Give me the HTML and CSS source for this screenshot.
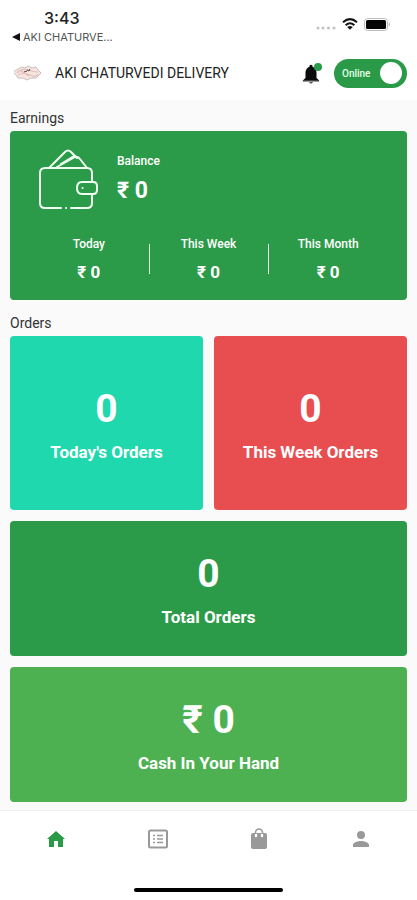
FILE: index.html
```html
<!DOCTYPE html>
<html lang="en">
<head>
<meta charset="utf-8">
<meta name="viewport" content="width=device-width, initial-scale=1">
<title>AKI CHATURVEDI DELIVERY</title>
<link rel="stylesheet" href="styles.css">
</head>
<body>
<div class="app">
  <div class="status">
    <div class="status-left">
      <div class="time">3:43</div>
      <a class="back" href="#"><svg width="9" height="8" viewBox="0 0 9 8" aria-hidden="true"><path d="M0 4L8 0v8z"/></svg>AKI CHATURVE...</a>
    </div>
    <div class="status-icons">
      <svg width="20" height="4" viewBox="0 0 20 4" fill="#c4c4c4" aria-hidden="true"><circle cx="2" cy="2" r="1.6"/><circle cx="7" cy="2" r="1.6"/><circle cx="12.500" cy="2" r="1.6"/><circle cx="18" cy="2" r="1.6"/></svg>
      <svg width="16" height="12" viewBox="0 0 16 12" aria-hidden="true"><path d="M1 4.200Q8-2 15 4.200M3.600 7.200Q8 3.400 12.400 7.200" fill="none" stroke="#151515" stroke-width="2"/><path d="M8 11.800L5.200 9Q8 6.800 10.800 9z" fill="#151515"/></svg>
      <svg width="27" height="13" viewBox="0 0 27 13" aria-hidden="true"><rect x=".5" y=".5" width="23" height="12" rx="3" fill="#fff" stroke="#bdbdbd"/><rect x="2" y="2" width="20" height="9" rx="1.500" fill="#050505"/><path d="M24.800 4.300q2 2.200 0 4.400z" fill="#aaa"/></svg>
    </div>
  </div>
  <header class="header">
    <svg class="logo" width="28" height="16" viewBox="0 0 28 16" aria-hidden="true"><path d="M4 4L8 2l3 1 3-2 4 2 4-1 2 3 3 3-3 3-2 2-5 0-4 2-4-2-5 0-2-3-3-3z" fill="#f5e6e2" stroke="#bdb0ae" stroke-width=".8"/><path d="M3 8q5-5 11-3t10 2M4 10q6-3 12 0t8-1M7 6l8 5" fill="none" stroke="#e3bcb7" stroke-width="1.200"/><path d="M13 5l2 1 1-2M10 7l3-1" stroke="#4f4747" stroke-width="1" fill="none"/></svg>
    <h1 class="title">AKI CHATURVEDI DELIVERY</h1>
    <button class="bell" type="button" aria-label="Notifications"><svg width="22" height="24" viewBox="0 0 22 24"><path d="M9.500 5.700V4.500q1.500-1.500 3 0v1.200Q16 7 16.500 11v6l2.700 2.500v.8H2.800v-.8L5.500 17v-6Q6 7 9.500 5.700z" fill="#0b0b0b"/><path d="M3 20h16" stroke="#777" stroke-width="1"/><path d="M9 21.300h4q-2 2.400-4 0z" fill="#222"/><circle cx="18" cy="6" r="4" fill="#2a9a48"/></svg></button>
    <label class="toggle">Online<input type="checkbox" checked></label>
  </header>
  <main class="main">
    <h2 class="heading">Earnings</h2>
    <section class="card earnings">
      <div class="balance">
        <svg width="60" height="62" viewBox="0 0 60 62" fill="none" stroke="#eefff1" stroke-width="2" stroke-linecap="round" stroke-linejoin="round" aria-hidden="true"><path d="M23 59H7q-5 0-5-5V24q0-5 5-5h42q5 0 5 5v9M54 45v9q0 5-5 5H33M28 59h.1"/><path d="M12 18L27 3q3-3 6 0l6 6M19 18L37 8q3-1 5 2l7 9M23 15L36 7"/><path d="M44 33h11q4 0 4 4v4q0 4-4 4H44q-5 0-5-6t5-6z"/><path d="M44.500 39h.1"/></svg>
        <div class="balance-text">
          <div class="label">Balance</div>
          <div class="balance-value">₹ 0</div>
        </div>
      </div>
      <div class="stats">
        <div class="stat"><div class="label">Today</div><div class="stat-value">₹ 0</div></div>
        <div class="stat"><div class="label">This Week</div><div class="stat-value">₹ 0</div></div>
        <div class="stat"><div class="label">This Month</div><div class="stat-value">₹ 0</div></div>
      </div>
    </section>
    <h2 class="heading">Orders</h2>
    <div class="orders">
      <section class="card tile tall teal"><div class="count">0</div><div class="caption">Today's Orders</div></section>
      <section class="card tile tall red"><div class="count">0</div><div class="caption">This Week Orders</div></section>
      <section class="card tile wide green"><div class="count">0</div><div class="caption">Total Orders</div></section>
      <section class="card tile wide light"><div class="count">₹ 0</div><div class="caption">Cash In Your Hand</div></section>
    </div>
  </main>
  <nav class="nav">
    <a class="active" href="#" aria-label="Home"><svg width="24" height="24" viewBox="0 0 24 24" fill="currentColor"><path d="M10 20v-6h4v6h5v-8h2L12 4l-9 8h2v8z"/></svg></a>
    <a href="#" aria-label="Orders"><svg width="24" height="24" viewBox="0 0 24 24" fill="none" stroke="currentColor"><rect x="3" y="3.500" width="18" height="17" rx="1.500" stroke-width="2"/><path d="M7 8.500h2M7 12h2M7 15.500h2M11 8.500h6M11 12h6M11 15.500h6" stroke-width="1.500"/></svg></a>
    <a href="#" aria-label="Deliveries"><svg width="24" height="24" viewBox="0 0 24 24" fill="none"><path d="M8.500 6.500V5.500a3.500 3.500 0 0 1 7 0v1" stroke="currentColor" stroke-width="1.600"/><rect x="4" y="6" width="16" height="16" rx="2" fill="currentColor"/><path d="M9 8v1M15 8v1" stroke="#fff" stroke-width="2.400" stroke-linecap="round"/></svg></a>
    <a href="#" aria-label="Profile"><svg width="24" height="24" viewBox="0 0 24 24" fill="currentColor"><path d="M12 12a4 4 0 1 0 0-8 4 4 0 0 0 0 8zm0 2c-2.700 0-8 1.300-8 4v2h16v-2c0-2.700-5.300-4-8-4z"/></svg></a>
  </nav>
  <div class="home-bar"></div>
</div>
</body>
</html>
```
FILE: styles.css
```css
* {
  box-sizing: border-box;
}

body {
  margin: 0;
  background: #fff;
  color: #222;
  font-family: Roboto, "Noto Sans", sans-serif;
}

h1,
h2 {
  margin: 0;
  font-weight: 400;
}

svg {
  display: block;
  flex: none;
}

.app {
  display: flex;
  flex-direction: column;
  min-height: 100vh;
}

.status {
  display: flex;
  justify-content: space-between;
  height: 46px;
  padding: 8px 26px 0 12px;
  font-family: Inter, sans-serif;
}

.time {
  padding-left: 32px;
  font-size: 16px;
  font-weight: 500;
  line-height: 20px;
}

.back {
  display: flex;
  align-items: center;
  gap: 2px;
  color: #555;
  font-size: 11px;
  line-height: 18px;
  text-decoration: none;
}

.back svg {
  fill: #111;
}

.status-icons {
  display: flex;
  align-items: center;
  gap: 6px;
  height: 32px;
}

.status-icons svg:first-child {
  margin-top: 8px;
}

.header {
  display: flex;
  align-items: center;
  height: 54px;
  padding: 0 10px 0 14px;
}

.title {
  flex: 1;
  margin-left: 13px;
  font-size: 14px;
}

.bell {
  margin-right: 12px;
  padding: 0;
  border: 0;
  background: none;
}

.toggle {
  display: flex;
  align-items: center;
  justify-content: space-between;
  width: 73px;
  height: 29px;
  padding: 0 5px 0 8px;
  border-radius: 15px;
  background: #2a9a48;
  color: #e5ffe9;
  font-size: 10px;
  font-weight: 500;
}

.toggle input {
  appearance: none;
  width: 22px;
  height: 22px;
  margin: 0;
  border-radius: 50%;
  background: #fff;
}

.main {
  flex: 1;
  padding: 5px 10px 8px;
  border-bottom: 1px solid #f0f0f0;
  background: #fafafa;
}

.heading {
  color: #333;
  font-size: 14px;
  line-height: 26px;
}

.card {
  border-radius: 4px;
  background: #2c9b49;
  color: #fff;
}

.earnings {
  margin-bottom: 10px;
  padding: 18px 19px 16px;
}

.balance {
  display: flex;
  gap: 19px;
  padding-left: 9px;
}

.label {
  font-size: 12px;
  font-weight: 500;
  line-height: 16px;
}

.balance-text {
  padding-top: 4px;
}

.balance-value {
  margin-top: 8px;
  font-size: 23px;
  font-weight: 700;
  line-height: 28px;
}

.stats {
  display: grid;
  grid-template-columns: repeat(3, 1fr);
  margin-top: 25px;
  text-align: center;
}

.stat {
  position: relative;
}

.stat + .stat::before {
  content: "";
  position: absolute;
  top: 8px;
  left: 0;
  width: 1px;
  height: 30px;
  background: #e0ffe4;
}

.stat-value {
  margin-top: 8px;
  font-size: 17px;
  font-weight: 700;
  line-height: 24px;
}

.orders {
  display: grid;
  grid-template-columns: 1fr 1fr;
  gap: 11px;
}

.tile {
  display: flex;
  flex-direction: column;
  align-items: center;
  justify-content: center;
  gap: 8px;
  padding-top: 3px;
}

.tall {
  min-height: 174px;
}

.wide {
  grid-column: 1 / -1;
  min-height: 135px;
}

.teal {
  background: #20d8ad;
}

.red {
  background: #e84d50;
}

.green {
  background: #2c9b49;
}

.light {
  background: #4eb151;
}

.count {
  font-size: 39px;
  font-weight: 700;
  line-height: 46px;
}

.caption {
  font-size: 17px;
  font-weight: 700;
  line-height: 24px;
}

.nav {
  display: grid;
  grid-template-columns: repeat(4, 1fr);
  padding: 16px 5px 0;
}

.nav a {
  display: flex;
  justify-content: center;
  color: #999;
}

.nav .active {
  color: #2a9a48;
}

.home-bar {
  width: 149px;
  height: 4px;
  margin: 37px auto 9px;
  border-radius: 2px;
  background: #000;
}
```
